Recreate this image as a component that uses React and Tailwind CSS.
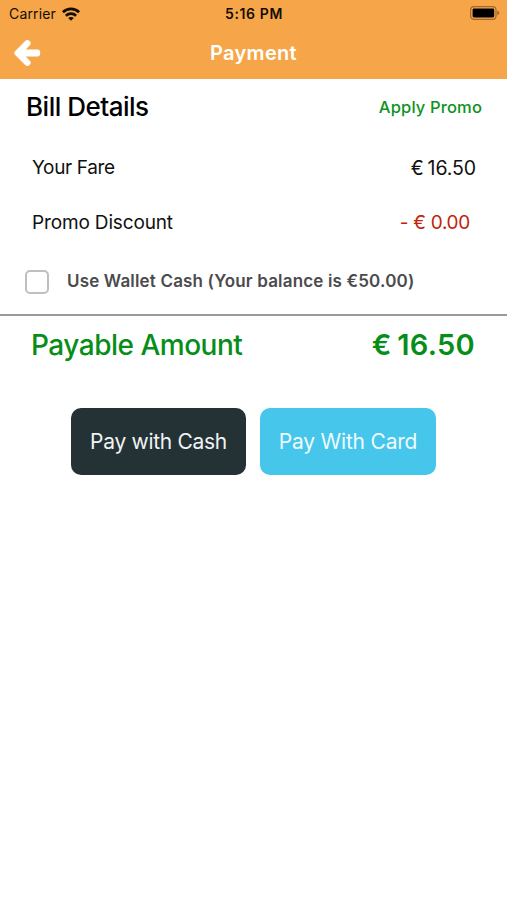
import { useState } from "react";

const BILL_ROWS = [
   {
      label: "Your Fare",
      value: "€ 16.50",
      labelClass: "tracking-[-0.35px]",
      valueClass:
         "text-[#111111] mr-[31px] text-[19.5px] tracking-[-0.1px] [word-spacing:-1.5px]",
   },
   {
      label: "Promo Discount",
      value: "- € 0.00",
      labelClass: "tracking-[-0.15px]",
      valueClass: "text-[#c3230c] mr-[37px] tracking-[-0.3px]",
   },
];

function WifiIcon() {
   return (
      <svg
         viewBox="0 0 18 14"
         className="w-[18px] h-[14px]"
         fill="none"
         stroke="#140d04"
         strokeWidth="2.7"
      >
         <path d="M0.9 5.2C5.4 0.8 12.6 0.8 17.1 5.2" />
         <path d="M3.9 8.7C6.8 6 11.2 6 14.1 8.7" />
         <path
            d="M9 13.8L6.2 11C7.8 9.7 10.2 9.7 11.8 11Z"
            fill="#140d04"
            stroke="none"
         />
      </svg>
   );
}

function BatteryIcon() {
   return (
      <svg viewBox="0 0 31 14" className="w-[31px] h-[14px]">
         <rect
            x="1.6"
            y="0.6"
            width="25.4"
            height="12.8"
            rx="3.4"
            fill="none"
            stroke="#a06a2c"
            strokeWidth="1.2"
         />
         <rect x="3.6" y="2.5" width="21.6" height="9" rx="1.4" fill="#000" />
         <path d="M28.2 4.6C31 5.4 31 8.6 28.2 9.4Z" fill="#a06a2c" />
      </svg>
   );
}

function BackArrow() {
   return (
      <svg viewBox="0 0 27 28" className="w-[27px] h-[28px]" fill="#fff">
         <path d="M1 12.2L11.2 1.9C13.8 -0.7 18.6 3.2 16 6L11.8 10.6H23.6C25.6 10.6 26.2 11.8 26.2 14C26.2 16.2 25.6 17.4 23.6 17.4H11.8L16 22C18.6 24.8 13.8 28.7 11.2 26.1L1 15.8C0 14.8 0 13.2 1 12.2Z" />
      </svg>
   );
}

export default function App() {
   const [useWallet, setUseWallet] = useState(false);

   return (
      <div className="w-full min-h-[900px] bg-white font-['Inter','Liberation_Sans',sans-serif]">
         <header className="bg-[#f6a649] h-[79px]">
            {/* Status bar */}
            <div className="grid grid-cols-3 items-center h-[27px] pl-[9px] pr-[7px] text-[14px] text-[#140d04]">
               <div className="flex items-center gap-[6px]">
                  <span className="tracking-[0.15px]">Carrier</span>
                  <WifiIcon />
               </div>
               <span className="text-center font-semibold tracking-[0.6px] pr-px">
                  5:16 PM
               </span>
               <div className="flex justify-end pb-px">
                  <BatteryIcon />
               </div>
            </div>
            {/* Title bar */}
            <div className="grid grid-cols-[1fr_auto_1fr] items-center h-[52px] px-[14px]">
               <button type="button" aria-label="Back">
                  <BackArrow />
               </button>
               <h1 className="text-[20px] font-semibold text-white tracking-[0.3px] pb-px">
                  Payment
               </h1>
            </div>
         </header>

         <main>
            <div className="flex items-center justify-between h-[56px] pl-[26px] pr-[25px]">
               <h2 className="text-[26px] font-medium text-black tracking-[-0.5px] pb-[2px]">
                  Bill Details
               </h2>
               <button
                  type="button"
                  className="text-[16.5px] font-medium text-[#0c9320] tracking-[0.15px]"
               >
                  Apply Promo
               </button>
            </div>

            <div className="pt-[6px]">
               {BILL_ROWS.map((row) => (
                  <div
                     key={row.label}
                     className="flex items-center justify-between h-[55px] pl-8 text-[19px] text-[#111111]"
                  >
                     <span className={row.labelClass}>{row.label}</span>
                     <span className={row.valueClass}>{row.value}</span>
                  </div>
               ))}
            </div>

            <label className="flex items-center h-[63px] pl-[25px] pb-[2px]">
               <input
                  type="checkbox"
                  checked={useWallet}
                  onChange={(e) => setUseWallet(e.target.checked)}
                  className="appearance-none w-6 h-6 border-2 border-[#bfbfbf] rounded-[5px] checked:bg-[#45c6ea]"
               />
               <span className="ml-[18px] text-[17px] font-semibold text-[#4b4b4e] whitespace-nowrap tracking-[0.17px]">
                  Use Wallet Cash (Your balance is €50.00)
               </span>
            </label>

            <div className="flex items-center justify-between h-[60px] border-t-2 border-[#9a9a9a] pl-[31px] pr-8 pb-px text-[#078e19]">
               <span className="text-[28px] font-medium tracking-[-0.5px]">
                  Payable Amount
               </span>
               <span className="text-[29px] font-semibold tracking-[0.3px] [word-spacing:-2px]">
                  € 16.50
               </span>
            </div>

            {/* Payment methods */}
            <div className="flex justify-center gap-[14px] mt-[34px]">
               <button
                  type="button"
                  className="w-[175px] h-[67px] rounded-[10px] bg-[#243235] text-[21px] text-[#eef3f3] tracking-[-0.3px]"
               >
                  Pay with Cash
               </button>
               <button
                  type="button"
                  className="w-[176px] h-[67px] rounded-[10px] bg-[#45c6ea] text-[21px] text-[#eefaff] tracking-[-0.2px]"
               >
                  Pay With Card
               </button>
            </div>
         </main>
      </div>
   );
}
